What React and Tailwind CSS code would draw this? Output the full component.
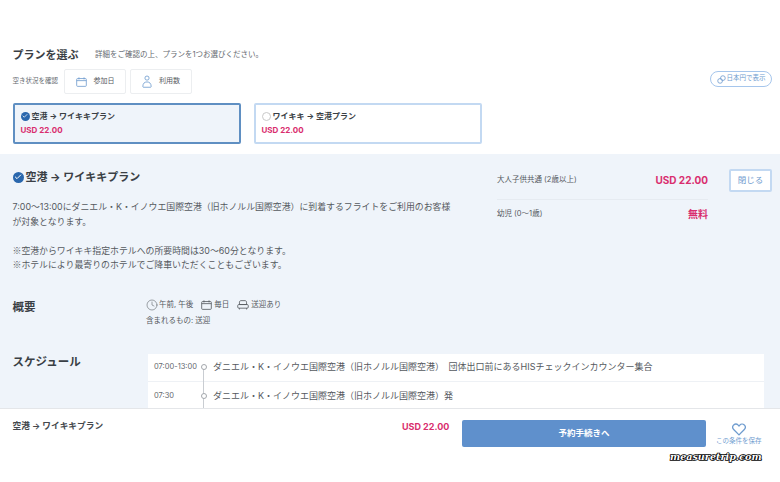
import React from 'react';
import { Clock, Check } from 'lucide-react';

const font = { fontFamily: '"Inter", "Noto Sans CJK JP", sans-serif' };

const CheckDot = ({ size }) => (
  <span className="flex items-center justify-center rounded-full bg-[#2a67ad] shrink-0" style={{ width: size, height: size }}>
    <Check size={size - 3} strokeWidth={3} className="text-white" />
  </span>
);

const CalendarIcon = ({ className }) => (
  <svg viewBox="0 0 12 11" fill="none" stroke="currentColor" strokeWidth="0.9" className={className}>
    <rect x="0.7" y="1.7" width="10.6" height="8.6" rx="1" />
    <path d="M0.7 4h10.6M3.2 0.4v2.3M8.8 0.4v2.3" />
  </svg>
);

const UserIcon = ({ className }) => (
  <svg viewBox="0 0 12 15" fill="none" stroke="currentColor" strokeWidth="1" className={className}>
    <circle cx="6" cy="3.4" r="2.5" />
    <path d="M1 13.6c0-3.6 1.8-5.6 5-5.6s5 2 5 5.6c0 .5-.3.8-.8.8H1.8c-.5 0-.8-.3-.8-.8z" />
  </svg>
);

const CarIcon = ({ className }) => (
  <svg viewBox="0 0 13 11" fill="none" stroke="currentColor" strokeWidth="0.9" className={className}>
    <path d="M2.6 5V2.4c0-1 .7-1.7 1.7-1.7h4.4c1 0 1.7.7 1.7 1.7V5" />
    <rect x="0.7" y="5" width="11.6" height="4" rx="1.2" />
    <path d="M2.6 9v1.4M10.4 9v1.4M2.6 5h7.8" />
  </svg>
);

const LinkCoinsIcon = ({ className }) => (
  <svg viewBox="0 0 11 11" fill="none" stroke="currentColor" strokeWidth="1" className={className}>
    <circle cx="7.2" cy="3.8" r="2.9" />
    <circle cx="3.8" cy="7.2" r="2.9" />
  </svg>
);

const HeartIcon = ({ className }) => (
  <svg viewBox="0 0 14 13" fill="none" stroke="currentColor" strokeWidth="1.3" className={className}>
    <path d="M7 11.9 1.9 6.8C.4 5.3.4 3.2 1.7 1.9c1.3-1.2 3.3-1.1 4.5.2l.8.9.8-.9c1.2-1.3 3.2-1.4 4.5-.2 1.3 1.3 1.3 3.4-.2 4.9z" />
  </svg>
);

const PlanCard = ({ name, active }) => (
  <div className={`w-[228px] h-[41px] rounded-[2px] border-2 pl-[6px] pt-[5px] ${active ? 'bg-[#eff4fa] border-[#5f8fc2]' : 'bg-white border-[#c3d9f2]'}`}>
    <div className="flex items-center gap-[2px] h-[12px] text-[8px] font-bold text-[#3a3f45]">
      {active ? <CheckDot size={9} /> : <span className="w-[9px] h-[9px] rounded-full border border-[#c9c9c9] shrink-0" />}
      <span>{name}</span>
    </div>
    <div className="mt-[2px] text-[8px] leading-[12px] font-bold text-[#d92d6e]">USD 22.00</div>
  </div>
);

const App = () => {
  return (
    <div style={font} className="relative w-[780px] h-[482px] overflow-hidden flex flex-col bg-white text-[#44484d]">
      <div className="h-[154px] shrink-0 pl-[12.5px] pr-[8px] pt-[47px]">
        <div className="flex items-center h-[16px]">
          <h2 className="text-[11px] font-bold text-[#3a3f45] w-[82.5px]">プランを選ぶ</h2>
          <p className="text-[7.5px] text-[#666a70]">詳細をご確認の上、プランを1つお選びください。</p>
        </div>
        <div className="flex items-center mt-[6px] h-[25px]">
          <span className="text-[6.5px] text-[#666a70] w-[51.5px]">空き状況を確認</span>
          <button className="w-[62px] h-[25px] rounded-[2px] border border-[#eceef0] flex items-center justify-center gap-[7px] text-[7px] text-[#55595e]">
            <CalendarIcon className="w-[11px] h-[10px] text-[#6f9ccf]" />参加日
          </button>
          <button className="ml-[4px] w-[62px] h-[25px] rounded-[2px] border border-[#eceef0] flex items-center justify-center gap-[7px] text-[7px] text-[#55595e]">
            <UserIcon className="w-[10px] h-[13px] text-[#6f9ccf]" />利用数
          </button>
          <button className="ml-auto mt-[-5px] w-[62px] h-[16px] rounded-full border border-[#a6c6ec] flex items-center justify-center gap-[1px] text-[6.5px] text-[#6f9ccf]">
            <LinkCoinsIcon className="w-[9px] h-[9px]" />日本円で表示
          </button>
        </div>
        <div className="flex gap-[13px] mt-[9px]">
          <PlanCard active name="空港 → ワイキキプラン" />
          <PlanCard name="ワイキキ → 空港プラン" />
        </div>
      </div>

      <div className="h-[254px] shrink-0 overflow-hidden bg-[#eff4fa] pl-[12.5px]">
        <div className="flex">
          <div className="w-[440px] shrink-0 pt-[16px]">
            <div className="flex items-center gap-[2px] h-[14px] text-[11px] font-bold text-[#3a3f45]">
              <CheckDot size={11} />
              <span>空港 → ワイキキプラン</span>
            </div>
            <div className="mt-[16px] text-[8.9px] leading-[14.5px] text-[#55595e]">
              <p>7:00〜13:00にダニエル・K・イノウエ国際空港（旧ホノルル国際空港）に到着するフライトをご利用のお客様が対象となります。</p>
              <p className="mt-[14.5px]"><span className="font-['Noto_Sans_CJK_JP']">※</span>空港からワイキキ指定ホテルへの所要時間は30〜60分となります。</p>
              <p><span className="font-['Noto_Sans_CJK_JP']">※</span>ホテルにより最寄りのホテルでご降車いただくこともございます。</p>
            </div>
          </div>
          <div className="ml-[44.5px] w-[211px] shrink-0 pt-[15px]">
            <div className="flex items-center justify-between h-[31px] border-b border-[#e6ebf1] pb-[8px]">
              <span className="text-[7.5px] text-[#55595e]">大人子供共通 (2歳以上)</span>
              <span className="text-[10px] font-bold text-[#d92d6e]">USD 22.00</span>
            </div>
            <div className="flex items-center justify-between h-[28px]">
              <span className="text-[7.5px] text-[#55595e]">幼児 (0〜1歳)</span>
              <span className="text-[10px] font-bold text-[#d92d6e]">無料</span>
            </div>
          </div>
          <button className="ml-[21px] mt-[15px] w-[43px] h-[23px] shrink-0 rounded-[2px] bg-white border-2 border-[#c3d9f2] text-[8.5px] text-[#6f9ccf]">閉じる</button>
        </div>

        <div className="flex mt-[24px]">
          <h3 className="w-[133.5px] pt-[1px] text-[11.5px] leading-[18px] font-bold text-[#3a3f45]">概要</h3>
          <div className="pt-[1px] text-[7.5px] text-[#55595e]">
            <div className="flex items-center gap-[5px] h-[14px]">
              <span className="flex items-center gap-[1px]"><Clock size={12} strokeWidth={1.1} />午前, 午後</span>
              <span className="flex items-center gap-[2px] ml-[3px]"><CalendarIcon className="w-[11px] h-[10px]" />毎日</span>
              <span className="flex items-center gap-[2px] ml-[3px]"><CarIcon className="w-[12px] h-[10px]" />送迎あり</span>
            </div>
            <div className="mt-[3px] leading-[12px]">含まれるもの: 送迎</div>
          </div>
        </div>

        <div className="flex mt-[27px]">
          <h3 className="w-[135.5px] text-[11.5px] leading-[16px] font-bold text-[#3a3f45]">スケジュール</h3>
          <div className="w-[616px] shrink-0 bg-white text-[9px] text-[#55595e]">
            <div className="flex items-center h-[28px] border-b border-[#eef1f5]">
              <span className="w-[45px] ml-[6px] text-[7.5px] text-[#666a70] whitespace-nowrap">07:00-13:00</span>
              <span className="relative w-[9px] h-full flex items-center justify-center">
                <span className="absolute left-[4px] top-[14px] bottom-[-1px] w-px bg-[#c9cdd2]" />
                <span className="relative w-[6px] h-[6px] rounded-full border border-[#a3a7ac] bg-white" />
              </span>
              <span className="ml-[5px]">ダニエル・K・イノウエ国際空港（旧ホノルル国際空港）　団体出口前にあるHISチェックインカウンター集合</span>
            </div>
            <div className="flex items-center h-[28px]">
              <span className="w-[45px] ml-[6px] text-[7.5px] text-[#666a70]">07:30</span>
              <span className="relative w-[9px] h-full flex items-center justify-center">
                <span className="absolute left-[4px] top-0 bottom-0 w-px bg-[#c9cdd2]" />
                <span className="relative w-[6px] h-[6px] rounded-full border border-[#a3a7ac] bg-white" />
              </span>
              <span className="ml-[5px]">ダニエル・K・イノウエ国際空港（旧ホノルル国際空港）発</span>
            </div>
          </div>
        </div>
      </div>

      <div className="flex-1 border-t border-[#e4e6e9] flex items-start pl-[12.5px] pt-[11px]">
        <span className="w-[389.5px] text-[8.7px] leading-[12px] font-bold text-[#44484d]">空港 → ワイキキプラン</span>
        <span className="w-[46px] mt-[1px] text-[9px] leading-[12px] font-bold text-[#d92d6e] whitespace-nowrap">USD 22.00</span>
        <button className="ml-[14px] w-[244px] h-[27px] shrink-0 rounded-[2px] bg-[#5f90cc] text-white text-[8.5px] font-bold">予約手続きへ</button>
        <div className="ml-[10px] mt-[3px] flex flex-col items-center">
          <HeartIcon className="w-[14px] h-[13px] text-[#6f9ccf]" />
          <span className="mt-[1px] text-[6.5px] text-[#6f9ccf] whitespace-nowrap">この条件を保存</span>
        </div>
      </div>

      <span
        className="absolute left-[670px] top-[450px] text-[9.6px] leading-[14px] italic font-bold text-white"
        style={{ fontFamily: '"DejaVu Serif", serif', WebkitTextStroke: '1.6px #000', paintOrder: 'stroke fill' }}
      >
        measuretrip.com
      </span>
    </div>
  );
};

export default App;
